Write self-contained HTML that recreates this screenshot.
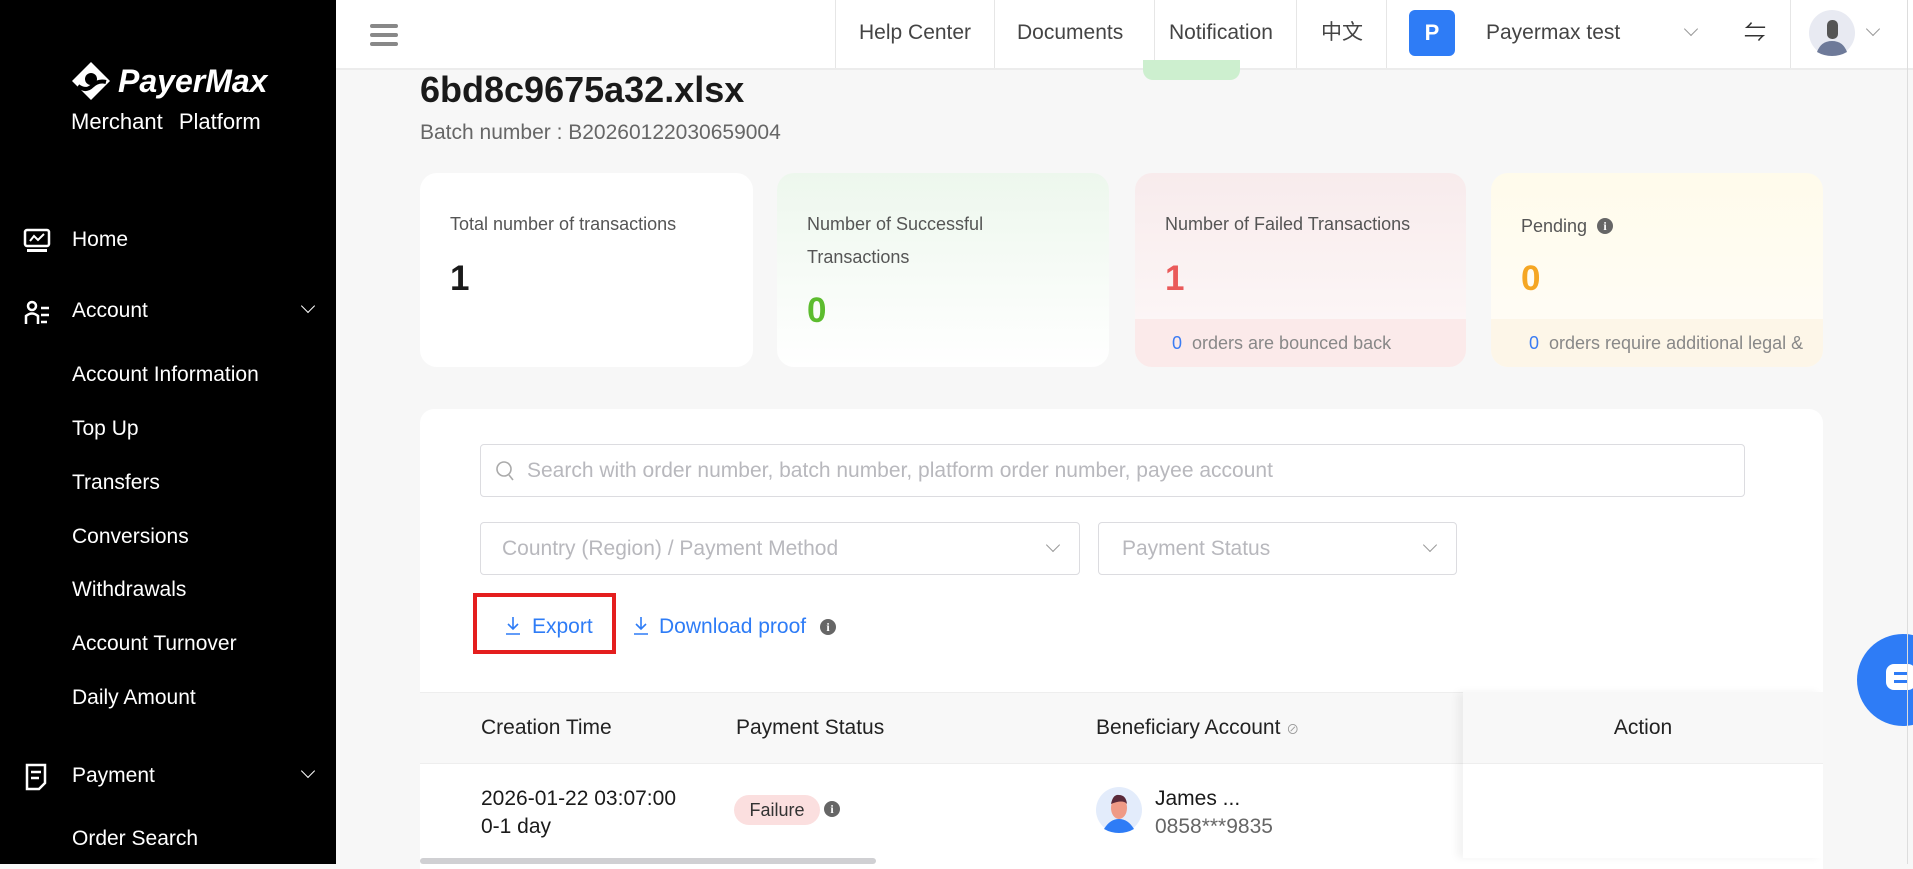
<!DOCTYPE html>
<html><head><meta charset="utf-8"><style>
*{margin:0;padding:0;box-sizing:border-box}
body{width:1913px;height:864px;overflow:hidden;background:#f7f7f7;font-family:"Liberation Sans","Noto Sans CJK SC",sans-serif;position:relative;color:#222}
.abs{position:absolute}
#side{left:0;top:0;width:336px;height:864px;background:#000;color:#fff}
.mi{position:absolute;left:72px;font-size:21px;color:#fff;line-height:24px}
#hdr{left:336px;top:0;width:1577px;height:70px;background:#fff;border-bottom:2px solid #ececec}
.ht{position:absolute;top:0;height:68px;line-height:66px;font-size:21px;color:#444}
.sep{position:absolute;top:0;width:1px;height:68px;background:#e6e6e6}
.card{position:absolute;top:173px;height:194px;border-radius:17px;overflow:hidden;background:#fff}
.lbl{position:absolute;left:30px;font-size:18px;color:#555;line-height:33px}
.num{position:absolute;left:30px;font-size:35px;font-weight:bold}
.foot{position:absolute;left:0;bottom:0;width:100%;height:48px;font-size:18px;color:#888;padding-left:37px;line-height:48px}
.inp{position:absolute;border:1px solid #dcdce0;border-radius:4px;background:#fff;font-size:21px;color:#b8b8bd}
.chev{position:absolute;width:10px;height:10px;border-right:1.5px solid #999;border-bottom:1.5px solid #999;transform:rotate(45deg)}
.th{position:absolute;top:716px;font-size:21px;color:#222}
.info{display:inline-block;width:16px;height:16px;border-radius:50%;background:#666;color:#fff;font-size:12px;font-weight:bold;text-align:center;line-height:16px;font-family:"Liberation Serif",serif}
</style></head><body>
<div id="side" class="abs">
 <svg class="abs" style="left:70px;top:60px" width="42" height="42" viewBox="0 0 42 42"><path d="M21 2 L40 21 L21 40 L2 21 Z" fill="#fff"/><circle cx="21" cy="19" r="6" fill="#000"/><path d="M8 26 Q16 32 22 26 T36 22" stroke="#000" stroke-width="4" fill="none"/></svg>
 <div class="abs" style="left:118px;top:63px;font-size:32px;font-weight:bold;font-style:italic;color:#fff">PayerMax</div>
 <div class="abs" style="left:71px;top:109px;font-size:22px;color:#fff;word-spacing:10px">Merchant Platform</div>
 <svg class="abs" style="left:23px;top:228px" width="28" height="26" viewBox="0 0 28 26"><rect x="2" y="2" width="24" height="16" rx="2" stroke="#fff" stroke-width="2.5" fill="none"/><path d="M7 13 L11 8 L15 12 L21 6" stroke="#fff" stroke-width="2" fill="none"/><rect x="4" y="21" width="20" height="3" fill="#fff"/></svg>
 <div class="mi" style="top:228px">Home</div>
 <svg class="abs" style="left:24px;top:300px" width="28" height="26" viewBox="0 0 28 26"><circle cx="8" cy="6" r="4" stroke="#fff" stroke-width="2.5" fill="none"/><path d="M2 24 V16 Q8 11 14 16 V24" stroke="#fff" stroke-width="2.5" fill="none"/><path d="M17 8h8M17 15h8M17 22h6" stroke="#fff" stroke-width="2.5"/></svg>
 <div class="mi" style="top:299px">Account</div>
 <div class="chev" style="left:303px;top:301px;border-color:#fff"></div>
 <div class="mi" style="top:363px">Account Information</div>
 <div class="mi" style="top:417px">Top Up</div>
 <div class="mi" style="top:471px">Transfers</div>
 <div class="mi" style="top:525px">Conversions</div>
 <div class="mi" style="top:578px">Withdrawals</div>
 <div class="mi" style="top:632px">Account Turnover</div>
 <div class="mi" style="top:686px">Daily Amount</div>
 <svg class="abs" style="left:24px;top:763px" width="24" height="28" viewBox="0 0 24 28"><path d="M3 2 H21 V20 L15 26 H3 Z" stroke="#fff" stroke-width="2.5" fill="none"/><path d="M7 9h10M7 15h8" stroke="#fff" stroke-width="2.5"/></svg>
 <div class="mi" style="top:764px">Payment</div>
 <div class="chev" style="left:303px;top:766px;border-color:#fff"></div>
 <div class="mi" style="top:827px">Order Search</div>
</div>

<div id="hdr" class="abs">
 <div class="abs" style="left:34px;top:24px;width:28px;height:4px;background:#888;border-radius:2px"></div>
 <div class="abs" style="left:34px;top:33px;width:28px;height:4px;background:#888;border-radius:2px"></div>
 <div class="abs" style="left:34px;top:42px;width:28px;height:4px;background:#888;border-radius:2px"></div>
 <div class="sep" style="left:499px"></div><div class="sep" style="left:658px"></div><div class="sep" style="left:818px"></div><div class="sep" style="left:960px"></div><div class="sep" style="left:1050px"></div><div class="sep" style="left:1454px"></div>
 <div class="ht" style="left:523px">Help Center</div>
 <div class="ht" style="left:681px">Documents</div>
 <div class="ht" style="left:833px">Notification</div>
 <div class="ht" style="left:985px">中文</div>
 <div class="abs" style="left:1073px;top:10px;width:46px;height:46px;background:#2e7cf6;border-radius:6px;color:#fff;font-size:22px;font-weight:bold;text-align:center;line-height:46px">P</div>
 <div class="ht" style="left:1150px">Payermax test</div>
 <div class="chev" style="left:1350px;top:24px"></div>
 <div class="ht" style="left:1408px;font-size:22px;color:#333">⇋</div>
 <svg class="abs" style="left:1473px;top:10px" width="46" height="46" viewBox="0 0 46 46"><circle cx="23" cy="23" r="23" fill="#e8eaf2"/><path d="M8 42 Q12 31 23 31 Q34 31 38 42 Q31 46 23 46 Q15 46 8 42Z" fill="#6e7a99"/><rect x="18" y="10" width="11" height="19" rx="5" fill="#555"/></svg>
 <div class="chev" style="left:1532px;top:24px"></div>
</div>

<div class="abs" style="left:1143px;top:60px;width:97px;height:20px;background:#cdefcf;border-radius:0 0 10px 10px"></div>
<div class="abs" style="left:420px;top:69px;font-size:36px;font-weight:bold;color:#1a1a1a">6bd8c9675a32.xlsx</div>
<div class="abs" style="left:420px;top:121px;font-size:21px;color:#666">Batch number : B20260122030659004</div>

<div class="card" style="left:420px;width:333px"><div class="lbl" style="top:35px">Total number of transactions</div><div class="num" style="top:86px;color:#1a1a1a">1</div></div>
<div class="card" style="left:777px;width:332px;background:linear-gradient(#edf7ed,#fff)"><div class="lbl" style="top:35px;width:290px">Number of Successful<br>Transactions</div><div class="num" style="top:118px;color:#5cbc2e">0</div></div>
<div class="card" style="left:1135px;width:331px;background:linear-gradient(#f8ebec,#fdf9f9)"><div class="lbl" style="top:35px">Number of Failed Transactions</div><div class="num" style="top:86px;color:#ea5a5a">1</div><div class="foot" style="background:#fbeaea"><span style="color:#3b7cf3">0</span>&nbsp; orders are bounced back</div></div>
<div class="card" style="left:1491px;width:332px;background:linear-gradient(#fffbeb,#fffdf8)"><div class="lbl" style="top:37px">Pending &nbsp;<span class="info" style="vertical-align:2px">i</span></div><div class="num" style="top:86px;color:#f5a623">0</div><div class="foot" style="background:#fdf6e8;padding-left:38px;white-space:nowrap"><span style="color:#3b7cf3">0</span>&nbsp; orders require additional legal &amp;</div></div>

<div class="abs" style="left:420px;top:409px;width:1403px;height:460px;background:#fff;border-radius:14px 14px 0 0"></div>
<div class="inp" style="left:480px;top:444px;width:1265px;height:53px;line-height:51px;padding-left:46px;white-space:nowrap">Search with order number, batch number, platform order number, payee account</div>
<svg class="abs" style="left:495px;top:460px" width="20" height="22" viewBox="0 0 20 22"><circle cx="9" cy="9" r="7" stroke="#aaa" stroke-width="1.6" fill="none"/><path d="M14 15 L18 20" stroke="#aaa" stroke-width="1.6"/></svg>
<div class="inp" style="left:480px;top:522px;width:600px;height:53px;line-height:51px;padding-left:21px">Country (Region) / Payment Method</div>
<div class="chev" style="left:1048px;top:540px"></div>
<div class="inp" style="left:1098px;top:522px;width:359px;height:53px;line-height:51px;padding-left:23px">Payment Status</div>
<div class="chev" style="left:1425px;top:540px"></div>

<div class="abs" style="left:473px;top:593px;width:143px;height:61px;border:4px solid #e41e1e"></div>
<svg class="abs" style="left:504px;top:616px" width="18" height="20" viewBox="0 0 18 20"><path d="M9 1 V13 M4 8 L9 13 L14 8 M2 18 H16" stroke="#2e7cf6" stroke-width="1.6" fill="none"/></svg>
<div class="abs" style="left:532px;top:615px;font-size:21px;color:#2e7cf6">Export</div>
<svg class="abs" style="left:632px;top:616px" width="18" height="20" viewBox="0 0 18 20"><path d="M9 1 V13 M4 8 L9 13 L14 8 M2 18 H16" stroke="#2e7cf6" stroke-width="1.6" fill="none"/></svg>
<div class="abs" style="left:659px;top:615px;font-size:21px;color:#2e7cf6">Download proof</div>
<span class="info abs" style="left:820px;top:619px">i</span>

<div class="abs" style="left:420px;top:692px;width:1403px;height:72px;background:#f8f8f8;border-top:1px solid #eee;border-bottom:1px solid #eee"></div>
<div class="th" style="left:481px">Creation Time</div>
<div class="th" style="left:736px">Payment Status</div>
<div class="th" style="left:1096px">Beneficiary Account <span style="font-size:13px;color:#999">⊘</span></div>
<div class="abs" style="left:1463px;top:692px;width:360px;height:166px;background:#fff;box-shadow:-6px 0 8px rgba(0,0,0,0.05)"></div>
<div class="abs" style="left:1463px;top:692px;width:360px;height:72px;background:#f8f8f8;border-bottom:1px solid #eee;text-align:center;line-height:72px;font-size:21px">Action</div>
<div class="abs" style="left:481px;top:785px;font-size:21px;line-height:28px;color:#1a1a1a">2026-01-22 03:07:00<br>0-1 day</div>
<div class="abs" style="left:734px;top:795px;width:86px;height:30px;background:#fbdfdf;border-radius:15px;font-size:18px;text-align:center;line-height:30px;color:#333">Failure</div>
<span class="info abs" style="left:824px;top:801px">i</span>
<svg class="abs" style="left:1096px;top:787px" width="46" height="46" viewBox="0 0 46 46"><circle cx="23" cy="23" r="23" fill="#e3ecfb"/><path d="M8 42 Q14 32 23 32 Q32 32 38 42 Q31 46 23 46 Q15 46 8 42Z" fill="#2e7cf6"/><ellipse cx="23" cy="21" rx="8" ry="11" fill="#ef9a86"/><path d="M15 17 Q17 7 23 8 Q30 8 31 17 Q27 12 15 17Z" fill="#5a2a3a"/></svg>
<div class="abs" style="left:1155px;top:785px;font-size:21px;line-height:28px;color:#1a1a1a">James ...<br><span style="color:#666">0858***9835</span></div>
<div class="abs" style="left:420px;top:858px;width:456px;height:6px;background:#d0d0d3;border-radius:3px"></div>

<div class="abs" style="left:1857px;top:634px;width:92px;height:92px;border-radius:50%;background:#2e7cf6"></div>
<div class="abs" style="left:1886px;top:664px;width:30px;height:26px;border-radius:8px;background:#fff"></div>
<div class="abs" style="left:1894px;top:672px;width:14px;height:3px;background:#2e7cf6"></div>
<div class="abs" style="left:1894px;top:680px;width:14px;height:3px;background:#2e7cf6"></div>
<div class="abs" style="left:1907px;top:0;width:1px;height:864px;background:#ddd"></div>
</body></html>
